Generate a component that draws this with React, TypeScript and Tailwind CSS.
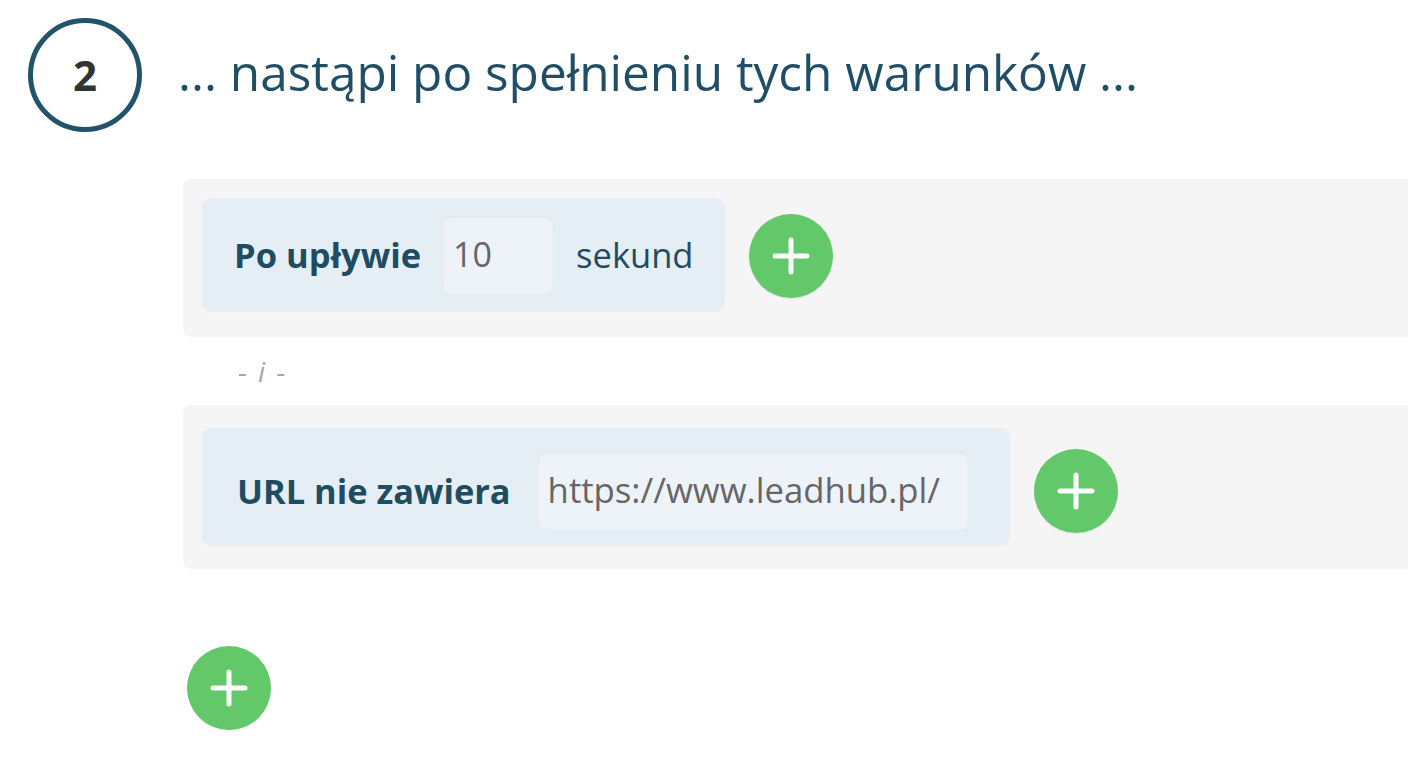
import React from "react";

function PlusButton({ className = "" }: { className?: string }) {
  return (
    <div
      className={
        "w-[84px] h-[84px] shrink-0 rounded-full bg-[#63c86a] flex items-center justify-center shadow-[0_1px_2px_rgba(0,0,0,0.08)] " +
        className
      }
    >
      <svg width="38" height="38" viewBox="0 0 38 38">
        <path d="M19 3v32M3 19h32" stroke="#fff" strokeWidth="5" strokeLinecap="round" fill="none" />
      </svg>
    </div>
  );
}

export default function App() {
  return (
    <div className="w-[1408px] h-[768px] bg-white overflow-hidden font-['Open_Sans',sans-serif]">
      <div className="flex items-center pl-[28px] pt-[18px] gap-[36px]">
        <div className="w-[114px] h-[114px] rounded-full border-[5px] border-[#22536b] flex items-center justify-center shrink-0">
          <span className="text-[42px] font-bold text-[#333333] leading-none">2</span>
        </div>
        <h1 className="text-[49.5px] text-[#1f4e66] leading-none pb-[4px]">
          ... nastąpi po spełnieniu tych warunków ...
        </h1>
      </div>

      <div className="ml-[183px] mt-[47px]">
        <div className="bg-[#f5f5f5] rounded-l-[8px] pl-[19px] pt-[19px] pb-[26px] flex items-center gap-[24px]">
          <div className="bg-[#e6eef5] rounded-[10px] h-[113px] flex items-center pl-[32px] pr-[32px] shadow-[0_1px_2px_rgba(0,0,0,0.04)]">
            <span className="text-[34.5px] font-bold text-[#1e4d63]">Po upływie</span>
            <div className="ml-[22px] w-[110px] h-[78px] bg-[#edf3f8] rounded-[8px] flex items-center pl-[10px] shadow-[inset_0_1px_2px_rgba(0,0,0,0.07)]">
              <span className="text-[34px] text-[#666666]">10</span>
            </div>
            <span className="ml-[23px] text-[34.5px] text-[#1e4d63]">sekund</span>
          </div>
          <PlusButton className="mt-[2px]" />
        </div>

        <div className="h-[68px] flex items-center pl-[55px]">
          <span className="text-[28px] italic text-[#a6a6a6] tracking-[2px]">- i -</span>
        </div>

        <div className="bg-[#f5f5f5] rounded-l-[8px] pl-[19px] pt-[23px] pb-[24px] flex items-center gap-[24px]">
          <div className="bg-[#e6eef5] rounded-[10px] h-[117px] flex items-center pt-[8px] pl-[35px] pr-[42px] shadow-[0_1px_2px_rgba(0,0,0,0.04)]">
            <span className="text-[34.4px] font-bold text-[#1e4d63]">URL nie zawiera</span>
            <div className="ml-[27px] w-[430px] h-[77px] bg-[#edf3f8] rounded-[8px] flex items-center pl-[10px] shadow-[inset_0_1px_2px_rgba(0,0,0,0.07)]">
              <span className="text-[34.7px] text-[#666666]">https://www.leadhub.pl/</span>
            </div>
          </div>
          <PlusButton className="mt-[8px]" />
        </div>

        <PlusButton className="ml-[4px] mt-[77px]" />
      </div>
    </div>
  );
}
